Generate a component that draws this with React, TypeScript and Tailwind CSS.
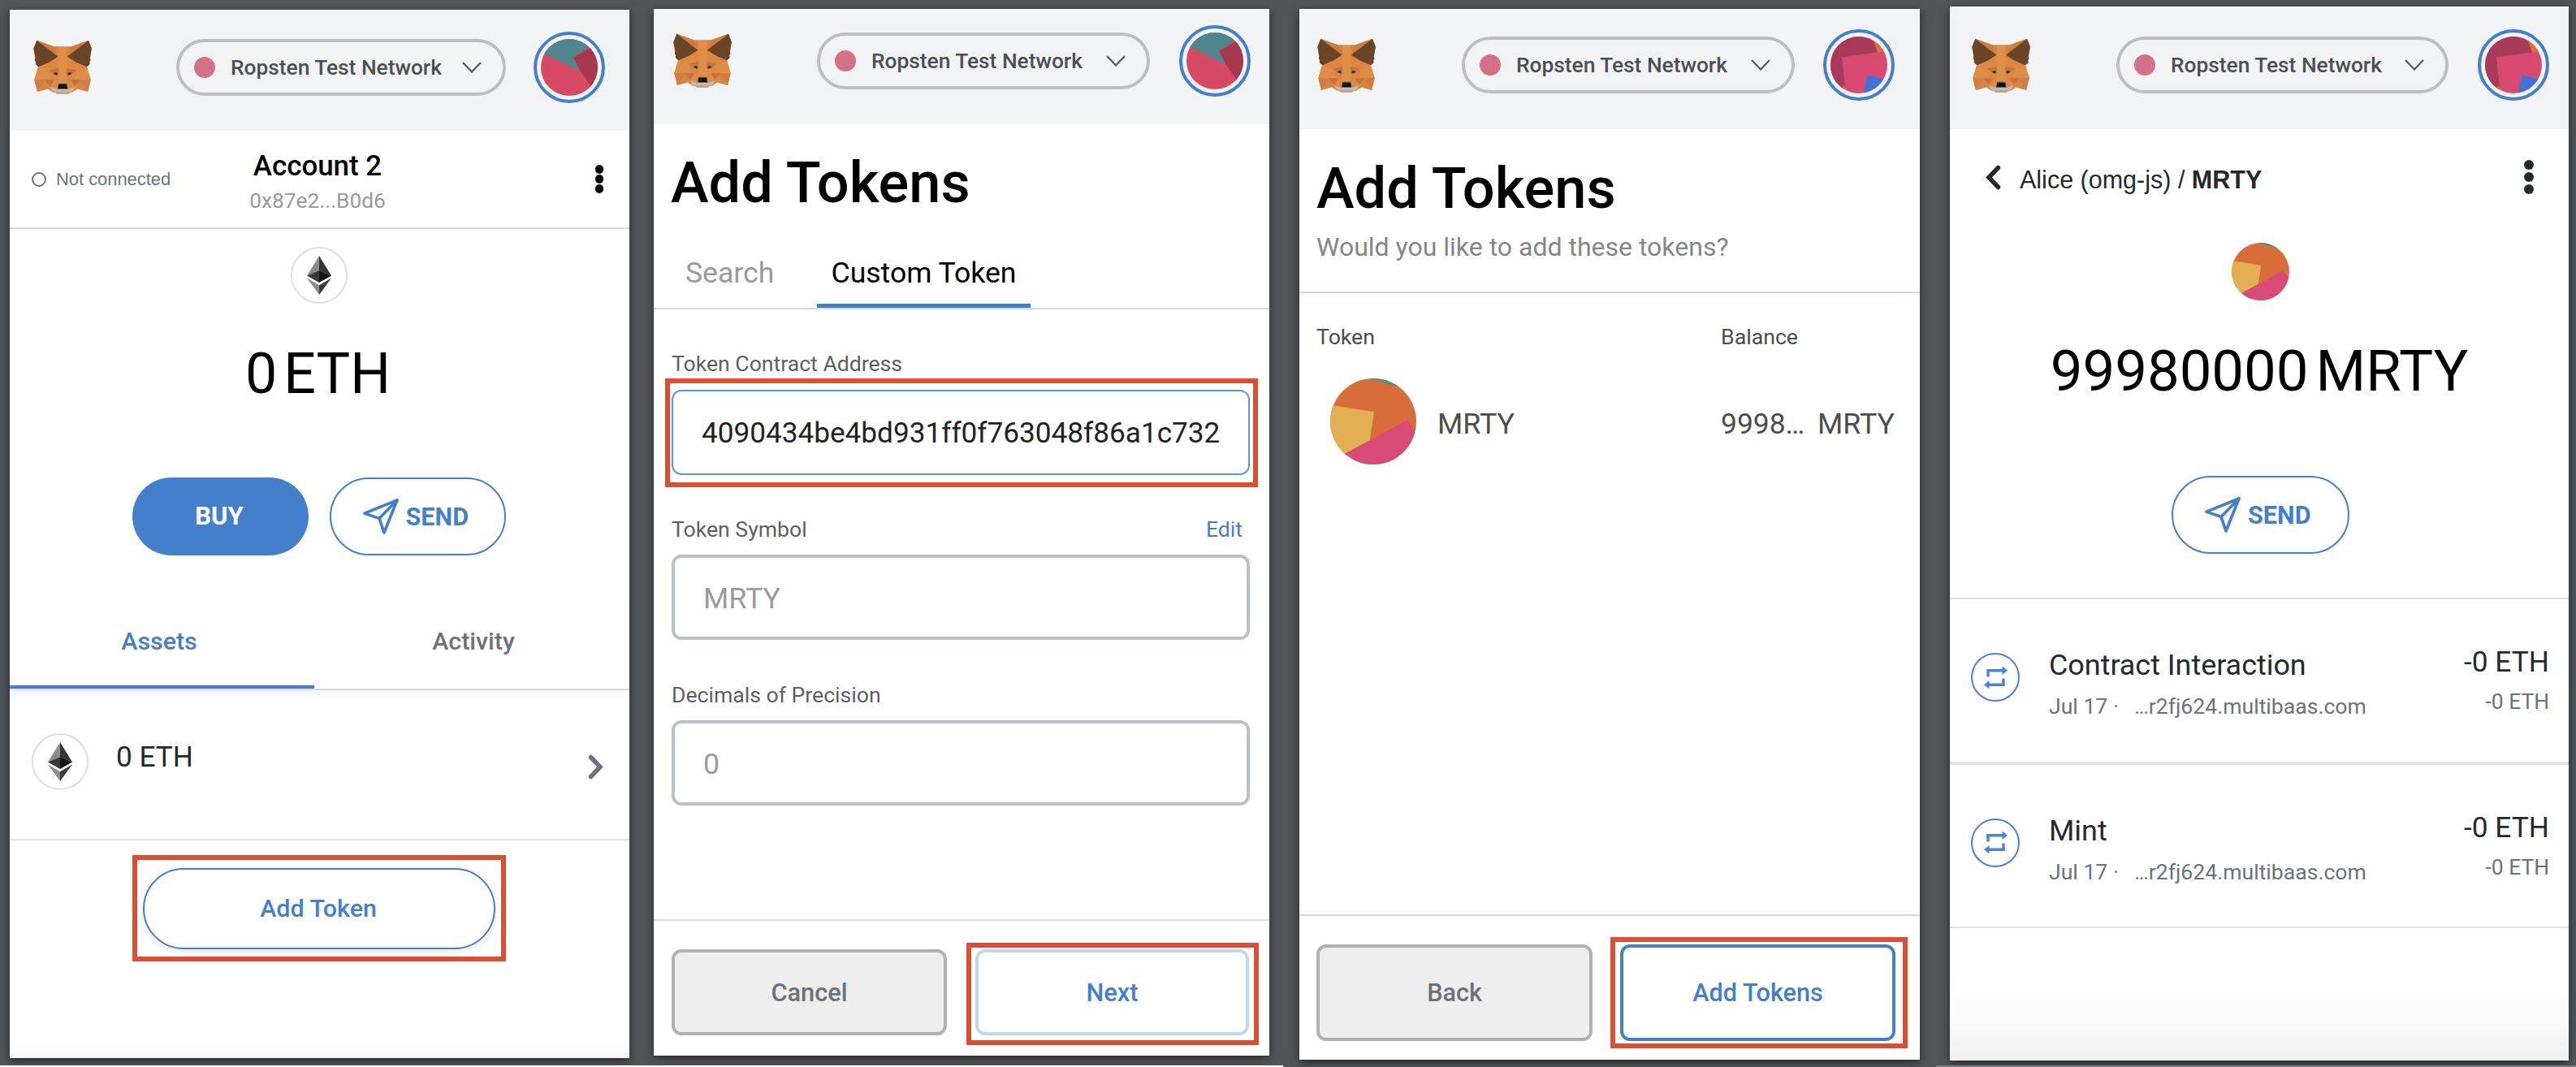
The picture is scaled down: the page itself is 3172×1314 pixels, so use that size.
import type { ReactNode } from 'react';

function Fox() {
  return (
    <svg className="h-[67px] w-[72px] shrink-0" viewBox="62 88 217 200" preserveAspectRatio="none">
      <polygon fill="#dc8843" points="75,90 140,113 202,113 267,90 278,120 270,180 261,187 275,235 264,279 228,268 205,282 137,282 114,268 77,279 66,235 80,187 72,180 63,120" />
      <polygon fill="#e08f48" points="156,113 186,113 187,192 188,250 154,250 155,192" />
      <polygon fill="#cf7c40" points="75,90 140,113 153,150" />
      <polygon fill="#cf7c40" points="267,90 202,113 189,150" />
      <polygon fill="#d68243" points="140,113 156,113 153,150" />
      <polygon fill="#d68243" points="202,113 186,113 189,150" />
      <polygon fill="#6a4428" points="75,90 154,150 122,170 82,187 74,181 70,176 72,169 67,162 70,155 63,120" />
      <polygon fill="#6a4428" points="267,90 188,150 220,170 260,187 268,181 272,176 270,169 275,162 272,155 279,120" />
      <polygon fill="#c8733b" points="118,201 157,191 156,214 150,222 134,210" />
      <polygon fill="#c8733b" points="224,201 185,191 186,214 192,222 208,210" />
      <polygon fill="#de8d48" points="80,190 118,203 128,235 66,235" />
      <polygon fill="#de8d48" points="262,190 224,203 214,235 275,235" />
      <polygon fill="#d07c43" points="66,235 110,235 77,279" />
      <polygon fill="#d07c43" points="275,235 232,235 264,279" />
      <polygon fill="#d68445" points="110,235 118,268 77,279" />
      <polygon fill="#d68445" points="232,235 224,268 264,279" />
      <polygon fill="#c6703f" points="104,235 142,235 125,260" />
      <polygon fill="#c6703f" points="238,235 200,235 217,260" />
      <polygon fill="#dd8b47" points="142,235 152,252 150,268 125,260" />
      <polygon fill="#dd8b47" points="200,235 190,252 192,268 217,260" />
      <polygon fill="#c6bab0" points="125,262 152,270 190,270 217,262 210,274 190,288 152,288 132,274" />
      <polygon fill="#b9a695" points="138,279 204,279 190,288 152,288" />
      <polygon fill="#4a5566" points="134,211 150,207 153,218 141,216" />
      <polygon fill="#4a5566" points="208,211 192,207 189,218 201,216" />
      <polygon fill="#2b2320" points="141,210 149,209 150,216 143,215" />
      <polygon fill="#2b2320" points="201,210 193,209 192,216 199,215" />
      <polygon fill="#8d7a6c" points="155,248 187,248 191,270 151,270" />
      <polygon fill="#141414" points="156,251 186,251 188,268 154,268" />
    </svg>
  );
}

type Art = 'teal' | 'rose' | 'token';

function Identicon({ art, className }: { art: Art; className: string }) {
  return (
    <div className={`overflow-hidden rounded-full ${className}`}>
      <svg className="block h-full w-full" viewBox="0 0 100 100">
        {art === 'teal' && (
          <>
            <rect width="100" height="100" fill="#d84a63" />
            <polygon fill="#4f868c" points="0,23 70,57 57,33 100,5 100,0 0,0" />
            <polygon fill="#a8384d" points="57,33 90,14 100,20 100,100 70,57" />
            <polygon fill="#d84a63" points="70,57 92,89 60,100" />
            <polygon fill="#a8384d" points="70,57 80,45 92,89" />
          </>
        )}
        {art === 'rose' && (
          <>
            <rect width="100" height="100" fill="#d84a70" />
            <polygon fill="#a83a5a" points="0,0 73,0 83,28 20,36.5 26,92 0,100" />
            <polygon fill="#dd6e35" points="73,0 83,28 100,25 100,0" />
            <polygon fill="#4373d6" points="65,68 100,76 100,100 58,100" />
            <polygon fill="#dd6e35" points="22,85 26,90 30,96 22,92" />
          </>
        )}
        {art === 'token' && (
          <>
            <rect width="100" height="100" fill="#d96d3a" />
            <polygon fill="#e2b053" points="0,31 51,39 46,72 10,92 0,90" />
            <polygon fill="#d74b77" points="10,91 46,72 90,48 105,75 100,100 10,100" />
            <polygon fill="#4f9188" points="46,0 80,10 100,0" />
          </>
        )}
      </svg>
    </div>
  );
}

function NetworkPill({ className }: { className: string }) {
  return (
    <div className={`flex h-[70px] shrink-0 items-center rounded-full border-4 border-[#bbbfc4] pl-[18px] pr-[26px] ${className}`}>
      <span className="h-[26px] w-[26px] rounded-full bg-[#d37286]" />
      <span className="ml-[19px] text-[26.3px] font-medium leading-[34px] text-[#4d4f52]">Ropsten Test Network</span>
      <svg className="ml-auto h-[14px] w-[24px]" viewBox="0 0 24 14" fill="none" stroke="#55585b" strokeWidth="2.2">
        <path d="M1 1l11 11.5L23 1" />
      </svg>
    </div>
  );
}

function AccountRing({ art, className }: { art: Art; className: string }) {
  return (
    <div className={`flex h-[88px] w-[88px] shrink-0 items-center justify-center rounded-full border-4 border-[#437fcb] ${className}`}>
      <Identicon art={art} className="h-[70px] w-[70px]" />
    </div>
  );
}

function EthBadge() {
  return (
    <div className="flex h-[70px] w-[70px] shrink-0 items-center justify-center rounded-full border-2 border-[#dedede] bg-white">
      <svg className="h-[48px] w-[30px]" viewBox="0 0 30 48">
        <polygon fill="#8c8c8c" points="15,0 0,24.5 15,18" />
        <polygon fill="#343434" points="15,0 30,24.5 15,18" />
        <polygon fill="#393939" points="0,24.5 15,18 15,33" />
        <polygon fill="#141414" points="30,24.5 15,18 15,33" />
        <polygon fill="#8c8c8c" points="0,27.5 15,36.3 15,48" />
        <polygon fill="#3c3c3b" points="30,27.5 15,36.3 15,48" />
      </svg>
    </div>
  );
}

function SendButton({ className }: { className: string }) {
  return (
    <div className={`flex h-[96px] items-center rounded-full border-2 border-[#437fcb] bg-white pl-[39px] ${className}`}>
      <svg className="h-[44px] w-[44px]" viewBox="0 0 44 44" fill="none" stroke="#437fcb" strokeWidth="3.6" strokeLinejoin="round" strokeLinecap="round">
        <path d="M42 2L2 18.2l18 6.2L26 42z" />
        <path d="M42 2L20 24.4" />
      </svg>
      <span className="ml-[9px] pt-px text-[30.6px] font-bold leading-[40px] text-[#437fcb]">SEND</span>
    </div>
  );
}

function Highlight({ className, children }: { className: string; children: ReactNode }) {
  return <div className={`shrink-0 border-[6px] border-[#db4e33] ${className}`}>{children}</div>;
}

function Dots({ className, dot }: { className: string; dot: string }) {
  return (
    <div className={`flex flex-col items-center ${className}`}>
      <span className={`rounded-full ${dot}`} />
      <span className={`rounded-full ${dot}`} />
      <span className={`rounded-full ${dot}`} />
    </div>
  );
}

function Panel({ className, children }: { className: string; children: ReactNode }) {
  return <section className={`flex shrink-0 flex-col bg-white shadow-[0_3px_10px_rgba(0,0,0,0.55)] ${className}`}>{children}</section>;
}

function AccountPanel() {
  return (
    <Panel className="ml-[12px] mt-[12px] h-[1291px] w-[763px]">
      <header className="flex h-[149px] shrink-0 items-center bg-[#f2f3f4] pb-[8px] pl-[29px]">
        <Fox />
        <NetworkPill className="ml-[104px] w-[406px]" />
        <AccountRing art="teal" className="ml-[34px]" />
      </header>
      <div className="flex h-[121px] shrink-0 items-center border-b-2 border-[#d9dadd] pl-[27px] pr-[32px]">
        <div className="flex w-[221px] items-center gap-[12px] font-['Liberation_Sans',Arial,sans-serif]">
          <span className="h-[18px] w-[18px] rounded-full border-[2.5px] border-[#6a737d]" />
          <span className="text-[21.9px] leading-[30px] text-[#6a737d]">Not connected</span>
        </div>
        <div className="flex w-[262px] flex-col items-center gap-[5px] self-start pt-[24px]">
          <span className="text-[34.9px] font-medium leading-[40px] text-black">Account 2</span>
          <span className="text-[26.3px] leading-[34px] text-[#989a9b]">0x87e2...B0d6</span>
        </div>
        <Dots className="ml-auto gap-[1.5px]" dot="h-[10.5px] w-[10.5px] bg-black" />
      </div>
      <div className="mt-[22px] flex justify-center pr-[2px]"><EthBadge /></div>
      <div className="mt-[46px] flex h-[80px] items-center justify-center gap-[8px] pr-[4px] text-[69.8px] leading-[80px] text-black">
        <span>0</span><span>ETH</span>
      </div>
      <div className="mt-[88px] flex justify-center gap-[26px] pr-[2px]">
        <div className="flex h-[96px] w-[217px] items-center justify-center rounded-full bg-[#437fcb] pr-[2px] text-[31px] font-bold leading-[40px] text-white">BUY</div>
        <SendButton className="w-[217px]" />
      </div>
      <div className="mt-[52px] flex h-[114px] shrink-0 border-b-2 border-[#dcdcdc] text-[30.4px] font-medium shadow-[0_4px_8px_rgba(0,0,0,0.06)]">
        <div className="flex w-[375px] items-center justify-center border-b-4 border-[#437fcb] pr-[7px] text-[#437fcb]">Assets</div>
        <div className="flex flex-1 items-center justify-center border-b-4 border-transparent pl-[4px] text-[#6a737d]">Activity</div>
      </div>
      <div className="flex h-[185px] shrink-0 items-start border-b-2 border-[#e2e2e2] pl-[27px] pr-[32px] pt-[53px]">
        <EthBadge />
        <span className="ml-[34px] mt-[9px] text-[35.2px] leading-[40px] text-[#24292e]">0 ETH</span>
        <svg className="ml-auto mt-[26px] h-[31px] w-[19px]" viewBox="0 0 19 31" fill="none" stroke="#6a737d" strokeWidth="5.5" strokeLinecap="round">
          <path d="M3.5 3.5l11.5 12-11.5 12" />
        </svg>
      </div>
      <Highlight className="ml-[151px] mt-[18px] flex h-[131px] w-[460px] items-center justify-center">
        <div className="flex h-[100px] w-[434px] items-center justify-center rounded-full border-2 border-[#437fcb] bg-white pr-[2px] pt-px text-[30.4px] font-medium leading-[40px] text-[#437fcb] shadow-[0_2px_12px_rgba(0,0,0,0.1)]">Add Token</div>
      </Highlight>
      <div className="mt-auto h-[24px] bg-linear-to-b from-white to-[#f9f9f9]" />
    </Panel>
  );
}

function CustomTokenPanel() {
  return (
    <Panel className="ml-[30px] mt-[11px] h-[1289px] w-[758px]">
      <header className="flex h-[142px] shrink-0 items-center bg-[#f2f3f4] pb-[15px] pl-[24px]">
        <Fox />
        <NetworkPill className="ml-[105px] w-[410px]" />
        <AccountRing art="teal" className="ml-[36px]" />
      </header>
      <h1 className="mt-[32px] pl-[21px] text-[70.3px] font-medium leading-[80px] text-black">Add Tokens</h1>
      <nav className="mt-[35px] flex h-[81px] shrink-0 border-b-2 border-[#d5d9dd] pl-[21px] text-[35.6px]">
        <div className="flex w-[180px] items-center border-b-[5px] border-transparent pl-[18px] text-[#989a9b]">Search</div>
        <div className="flex w-[263px] items-center justify-center border-b-[5px] border-[#437fcb] text-black">Custom Token</div>
      </nav>
      <div className="mt-[50px] pl-[22px] text-[26.6px] leading-[34px] text-[#5d5f61]">Token Contract Address</div>
      <Highlight className="ml-[14px] mt-px flex h-[134px] w-[730px] items-center pb-px pl-[2px]">
        <div className="flex h-[105px] w-[712px] items-center overflow-hidden rounded-[12px] border-2 border-[#5c9ade] pl-[35px] pt-px text-[35.15px] leading-[40px] text-[#222]">4090434be4bd931ff0f763048f86a1c732</div>
      </Highlight>
      <div className="mt-[35px] flex justify-between pl-[22px] pr-[33px] text-[26.6px] leading-[34px] text-[#5d5f61]">
        <span>Token Symbol</span>
        <span className="text-[#437fcb]">Edit</span>
      </div>
      <div className="ml-[22px] mt-[14px] flex h-[105px] w-[712px] shrink-0 items-center rounded-[12px] border-4 border-[#bbc0c5] pl-[35px] pt-[3px] text-[35.8px] leading-[40px] text-[#9b9b9b]">MRTY</div>
      <div className="mt-[51px] pl-[22px] text-[26.6px] leading-[34px] text-[#5d5f61]">Decimals of Precision</div>
      <div className="ml-[22px] mt-[14px] flex h-[105px] w-[712px] shrink-0 items-center rounded-[12px] border-4 border-[#bbc0c5] pl-[35px] pt-[2px] text-[35.8px] leading-[40px] text-[#9b9b9b]">0</div>
      <footer className="mt-auto flex h-[168px] shrink-0 items-start border-t-2 border-[#dadcde] pl-[22px] pt-[27px] text-[30.7px] font-medium leading-[40px]">
        <div className="mt-[8px] flex h-[106px] w-[339px] shrink-0 items-center justify-center rounded-[12px] border-4 border-[#b1b1b1] bg-[#eee] pt-px text-[#6a737d]">Cancel</div>
        <Highlight className="ml-[24px] h-[126px] w-[360px] pl-[5px] pt-[2px]">
          <div className="flex h-[106px] w-[337px] items-center justify-center rounded-[12px] border-4 border-[#c0d7ef] bg-white pt-px text-[#437fcb]">Next</div>
        </Highlight>
      </footer>
    </Panel>
  );
}

function ConfirmPanel() {
  return (
    <Panel className="ml-[37px] mt-[11px] h-[1294px] w-[764px]">
      <header className="flex h-[148px] shrink-0 items-center bg-[#f2f3f4] pb-[10px] pl-[22px]">
        <Fox />
        <NetworkPill className="ml-[106px] w-[410px]" />
        <AccountRing art="rose" className="ml-[35px]" />
      </header>
      <div className="border-b-2 border-[#d5d9dd] pb-[35px] pl-[21px] pt-[33px]">
        <h1 className="text-[70.3px] font-medium leading-[80px] text-black">Add Tokens</h1>
        <p className="mt-[12px] text-[32px] leading-[40px] text-[#868686]">Would you like to add these tokens?</p>
      </div>
      <div className="mt-[37px] flex pl-[21px] text-[26.7px] leading-[34px] text-[#4d4d4d]">
        <span className="w-[498px]">Token</span>
        <span>Balance</span>
      </div>
      <div className="mt-[34px] flex h-[106px] items-center pl-[38px] text-[35.8px] leading-[40px] text-[#4d4d4d]">
        <Identicon art="token" className="h-[106px] w-[106px]" />
        <span className="ml-[26px] w-[349px] pt-[6px]">MRTY</span>
        <span className="w-[119px] pt-[6px] text-[35.4px]">9998…</span>
        <span className="pt-[6px]">MRTY</span>
      </div>
      <footer className="mt-auto flex h-[179px] shrink-0 items-start border-t-2 border-[#d5d9dd] pl-[21px] pt-[26px] text-[30.6px] font-medium leading-[40px]">
        <div className="mt-[9px] flex h-[119px] w-[340px] shrink-0 items-center justify-center rounded-[12px] border-4 border-[#b1b1b1] bg-[#eee] pt-px text-[#6a737d]">Back</div>
        <Highlight className="ml-[22px] h-[137px] w-[366px] pl-[6px] pt-[3px]">
          <div className="flex h-[119px] w-[339px] items-center justify-center rounded-[12px] border-4 border-[#437fcb] bg-white pt-px text-[#437fcb]">Add Tokens</div>
        </Highlight>
      </footer>
    </Panel>
  );
}

function ActivityRow({ title }: { title: string }) {
  return (
    <div className="flex h-[203.5px] shrink-0 items-start border-y-2 border-[#e2e2e2] pl-[26px] pr-[24px]">
      <div className="mt-[66px] flex h-[60px] w-[60px] items-center justify-center rounded-full border-2 border-[#4a80e0]">
        <svg className="h-[29px] w-[29px]" viewBox="0 0 29 29" fill="none" stroke="#4a80e0" strokeWidth="3.4">
          <path d="M5 13.5V5.7h18M24 15.5v7.8H6" />
          <path d="M22.5 0.5l6.5 5.2-6.5 5.2zM6.5 18.1L0 23.3l6.5 5.2z" fill="#4a80e0" stroke="none" />
        </svg>
      </div>
      <div className="ml-[36px] mt-[61px]">
        <div className="text-[35.9px] leading-[40px] text-[#24292e]">{title}</div>
        <div className="mt-[14px] flex text-[26.6px] leading-[34px] text-[#6a737d]">
          <span className="w-[105px]">Jul 17 ·</span>
          <span>…r2fj624.multibaas.com</span>
        </div>
      </div>
      <div className="ml-auto mt-[57px] text-right">
        <div className="text-[35.3px] leading-[40px] text-[#24292e]">-0 ETH</div>
        <div className="mt-[12px] text-[26.4px] leading-[34px] text-[#6a737d]">-0 ETH</div>
      </div>
    </div>
  );
}

function TokenPanel() {
  return (
    <Panel className="ml-[37px] mt-[8px] h-[1298px] w-[762px]">
      <header className="flex h-[151px] shrink-0 items-center bg-[#f2f3f4] pb-[7px] pl-[27px]">
        <Fox />
        <NetworkPill className="ml-[106px] w-[409px]" />
        <AccountRing art="rose" className="ml-[36px]" />
      </header>
      <div className="mt-[42px] flex h-[40px] items-center pl-[43px] pr-[43px] font-['Liberation_Sans',Arial,sans-serif] text-[30.5px] leading-[40px] text-[#24292e]">
        <svg className="-mt-[6px] h-[31px] w-[20px]" viewBox="0 0 20 31" fill="none" stroke="#24292e" strokeWidth="5.5" strokeLinecap="round">
          <path d="M16.5 3.5L5 15.5l11.5 12" />
        </svg>
        <span className="ml-[23px]">Alice (omg-js) / <b className="font-bold">MRTY</b></span>
        <Dots className="-mt-[6px] ml-auto gap-[2.5px]" dot="h-[12.5px] w-[12.5px] bg-[#24292e]" />
      </div>
      <div className="mt-[58px] flex justify-center pl-[3px]"><Identicon art="token" className="h-[71px] w-[71px]" /></div>
      <div className="mt-[47px] flex h-[80px] items-center justify-center gap-[9px] text-[70.7px] leading-[80px] text-black">
        <span>99980000</span><span>MRTY</span>
      </div>
      <div className="mt-[89px] flex justify-center pl-[3px]"><SendButton className="w-[219px]" /></div>
      <div className="mt-[54px]">
        <ActivityRow title="Contract Interaction" />
        <ActivityRow title="Mint" />
      </div>
      <div className="mt-auto h-[100px] bg-linear-to-b from-white via-[#fafafa] to-[#f0f0f0]" />
    </Panel>
  );
}

export default function App() {
  return (
    <div className="h-[1314px] w-[3172px] overflow-hidden bg-[#515558] font-[Roboto,sans-serif]">
      <div className="flex h-[1312px] items-start">
        <AccountPanel />
        <CustomTokenPanel />
        <ConfirmPanel />
        <TokenPanel />
      </div>
      <div className="flex h-[2px] justify-between">
        <div className="w-[1580px] bg-white" />
        <div className="w-[788px] bg-[#77797b]" />
      </div>
    </div>
  );
}
